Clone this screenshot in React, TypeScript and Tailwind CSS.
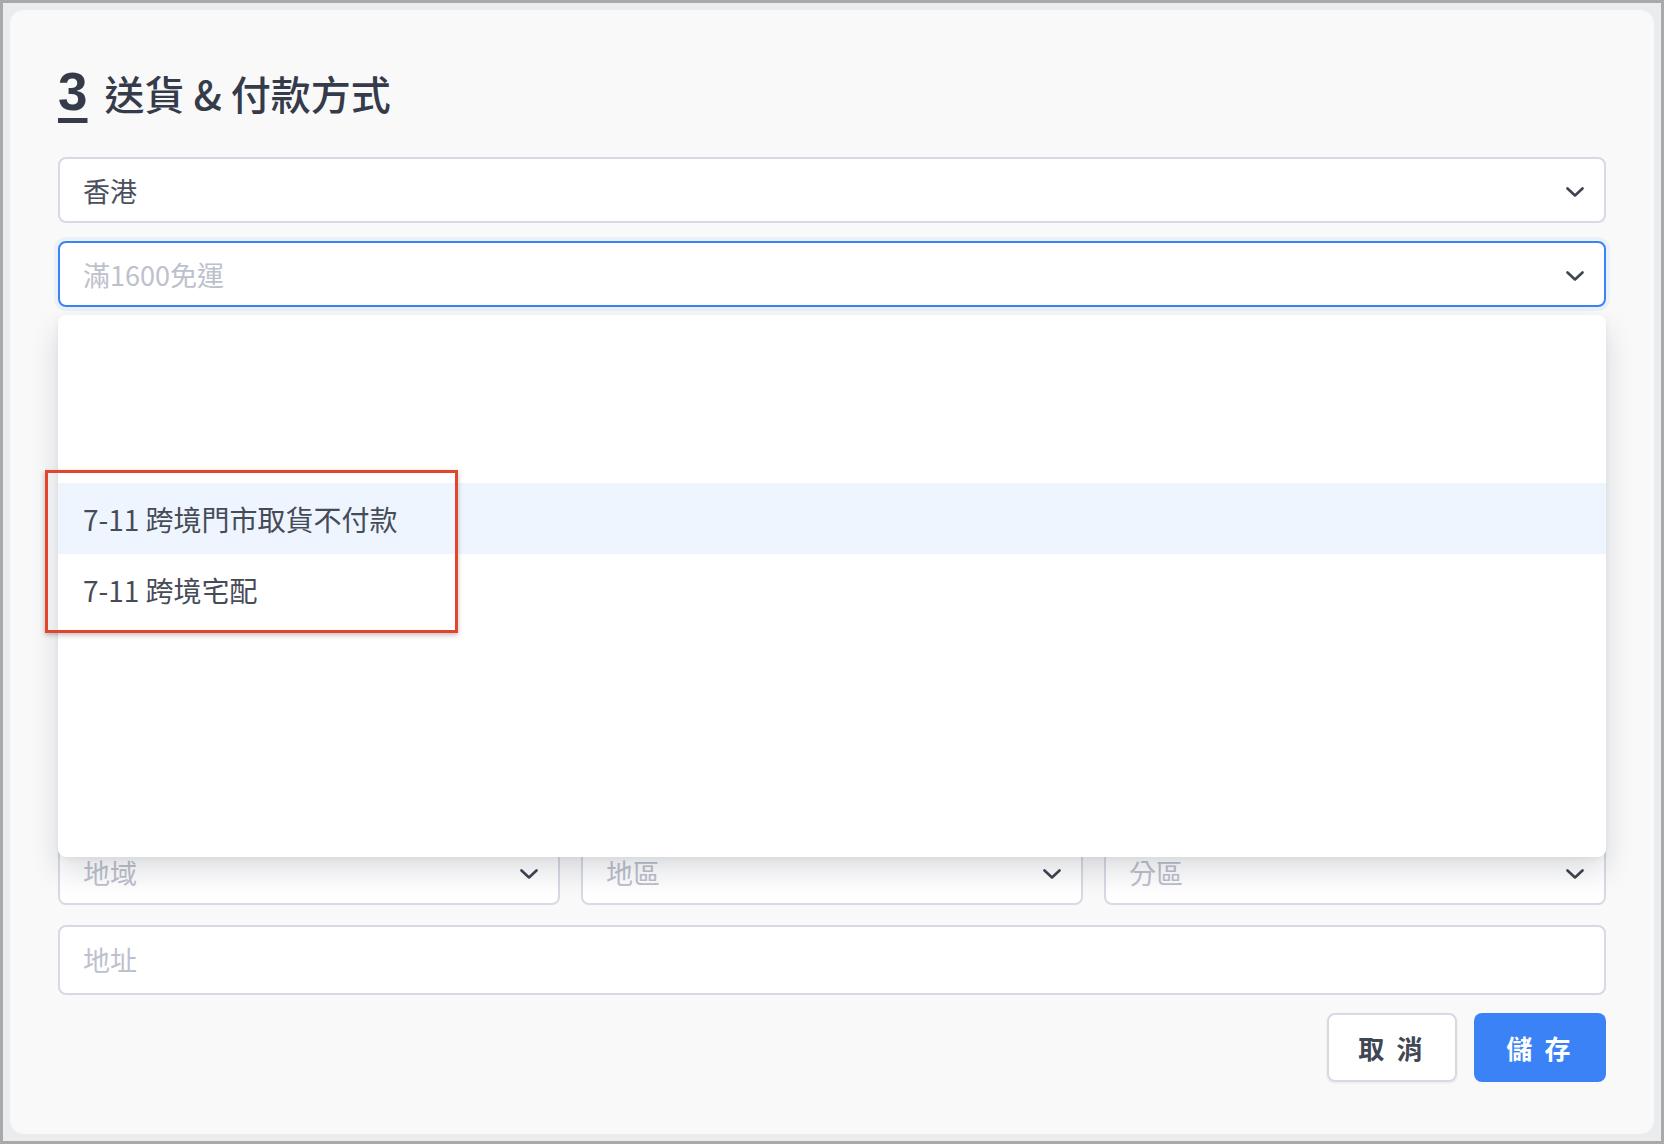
const font = { fontFamily: '"Noto Sans CJK TC", "Noto Sans", "Liberation Sans", sans-serif' };

function Chevron() {
  return (
    <svg width="18" height="10" viewBox="0 0 18 10" fill="none" className="shrink-0 mt-[3px]">
      <path d="M1.5 1.5L9 8.5L16.5 1.5" stroke="#3f4452" strokeWidth="2.6" strokeLinecap="round" strokeLinejoin="round" />
    </svg>
  );
}

function Select({
  value,
  placeholder,
  focused,
  className = '',
}: {
  value?: string;
  placeholder?: string;
  focused?: boolean;
  className?: string;
}) {
  return (
    <div
      className={`flex items-center justify-between h-[66px] bg-white rounded-[8px] border-2 pl-[23px] pr-[20px] ${
        focused
          ? 'border-[#3b82f6] shadow-[0_0_0_4px_rgba(59,130,246,0.07)]'
          : 'border-[#d7dae5]'
      } ${className}`}
    >
      {value ? (
        <span className="text-[27px] text-[#4a4f5e] leading-none">{value}</span>
      ) : (
        <span className="text-[27px] text-[#bdc1cd] leading-none">{placeholder}</span>
      )}
      <Chevron />
    </div>
  );
}

export default function App() {
  const hiddenRows = [1, 2, 3, 4, 5, 6];

  return (
    <div style={font} className="relative w-[1664px] h-[1144px] bg-[#ebecee] border-[3px] border-[#a8a9ab] p-[7px]">
      <div className="h-full bg-[#f9f9fa] rounded-[14px] px-[48px] pt-[55px]">
        <h2 className="flex items-baseline h-[62px] text-[#363b4a]">
          <span
            className="text-[53px] font-bold leading-none underline decoration-[5px] underline-offset-[8px]"
            style={{ fontFamily: '"Liberation Sans", Arial, sans-serif' }}
          >
            3
          </span>
          <span className="ml-[17px] text-[40px] font-medium leading-none">送貨 &amp; 付款方式</span>
        </h2>

        <div className="mt-[30px] flex flex-col">
          <Select value="香港" />

          <div className="relative mt-[18px]">
            <Select placeholder="滿1600免運" focused />

            <div className="absolute left-0 right-0 top-[74px] h-[542px] z-10 bg-white rounded-[8px] shadow-[0_14px_30px_rgba(15,23,42,0.14),0_2px_6px_rgba(15,23,42,0.05)] pt-[168px]">
              <div className="h-[71px] bg-[#eff5fe] flex items-center px-[25px] text-[28px] text-[#464b58]">
                7-11 跨境門市取貨不付款
              </div>
              <div className="h-[72px] flex items-center px-[25px] text-[28px] text-[#464b58]">
                7-11 跨境宅配
              </div>
            </div>
          </div>

          <div className="mt-[18px] flex flex-col gap-[20px]">
            {hiddenRows.map((p) => (
              <div key={p} className="h-[66px] bg-white rounded-[8px] border-2 border-[#d7dae5]" />
            ))}
          </div>

          <div className="mt-[18px] grid grid-cols-3 gap-[21px]">
            <Select placeholder="地域" />
            <Select placeholder="地區" />
            <Select placeholder="分區" />
          </div>

          <div className="mt-[20px] h-[70px] bg-white rounded-[8px] border-2 border-[#d7dae5] pl-[23px] flex items-center text-[27px] text-[#bdc1cd]">
            地址
          </div>

          <div className="mt-[18px] flex justify-end gap-[17px]">
            <button className="w-[130px] h-[69px] bg-white rounded-[8px] border-2 border-[#d7dae5] shadow-[0_1px_3px_rgba(0,0,0,0.08)] text-[26px] font-bold text-[#414654] tracking-[0.12em]">
              取 消
            </button>
            <button className="w-[132px] h-[69px] bg-[#3b82f6] rounded-[8px] text-[26px] font-bold text-white tracking-[0.12em]">
              儲 存
            </button>
          </div>
        </div>
      </div>

      <div className="absolute left-[42px] top-[467px] w-[413px] h-[163px] z-20 border-[3px] border-[#e2452c] shadow-[0_2px_5px_rgba(0,0,0,0.25)]" />
    </div>
  );
}
